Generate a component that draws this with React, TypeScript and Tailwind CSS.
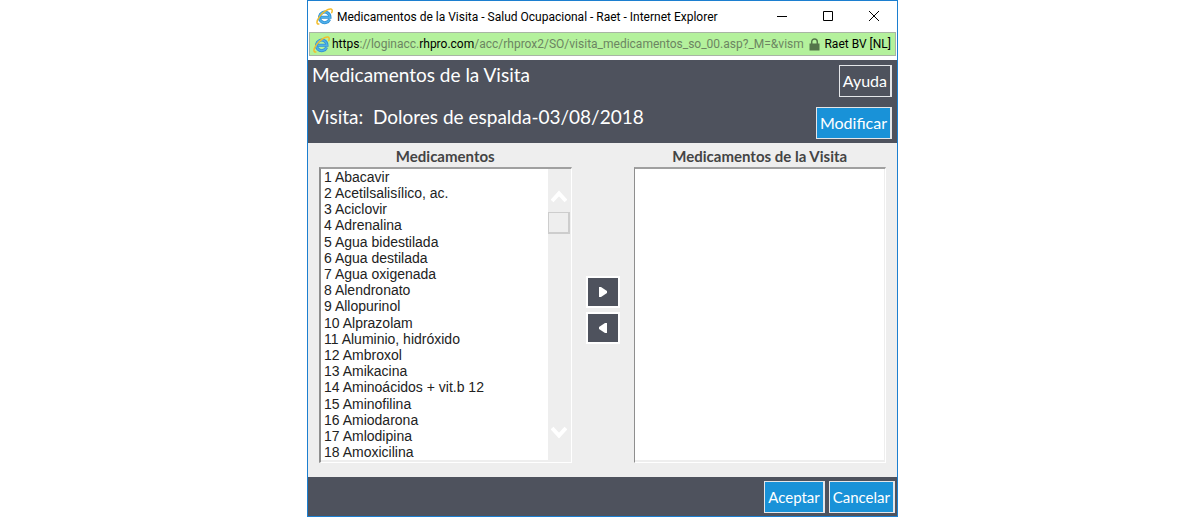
import React from 'react';

const MEDICAMENTOS = [
  'Abacavir',
  'Acetilsalisílico, ac.',
  'Aciclovir',
  'Adrenalina',
  'Agua bidestilada',
  'Agua destilada',
  'Agua oxigenada',
  'Alendronato',
  'Allopurinol',
  'Alprazolam',
  'Aluminio, hidróxido',
  'Ambroxol',
  'Amikacina',
  'Aminoácidos + vit.b 12',
  'Aminofilina',
  'Amiodarona',
  'Amlodipina',
  'Amoxicilina',
];

const ExplorerIcon: React.FC = () => (
  <svg viewBox="0 0 17 17" className="w-[17px] h-[17px] shrink-0" fill="none" aria-hidden="true">
    <path d="M13.6 11.4A5.3 5.3 0 1 1 14 9.2H5" stroke="#2f8fd2" strokeWidth="3" />
    <path d="M13.6 11.4A5.3 5.3 0 1 1 14 9.2H5" stroke="#4fb0ea" strokeWidth="1.6" />
    <path
      d="M2.8 15.9C.2 16.4.4 13 3 9.4 6.2 4.6 12.2.4 15 1c1.5.4 1.4 2 .7 3.6"
      stroke="#f3bd2b"
      strokeWidth="1.5"
      strokeLinecap="round"
    />
  </svg>
);

const TitleBar: React.FC = () => (
  <div className="flex items-center h-[31px] bg-white pl-2 pr-[17px]">
    <ExplorerIcon />
    <span className="ml-1 flex-1 truncate text-[12px] leading-4 text-black">
      Medicamentos de la Visita - Salud Ocupacional - Raet - Internet Explorer
    </span>
    <div className="flex items-center gap-[34px]">
      <button type="button" aria-label="Minimizar">
        <svg viewBox="0 0 12 12" className="w-3 h-3" stroke="#000" fill="none">
          <path d="M1 5.5h10" />
        </svg>
      </button>
      <button type="button" aria-label="Maximizar">
        <svg viewBox="0 0 12 12" className="w-3 h-3" stroke="#000" fill="none">
          <path d="M1.5 .5h9v9h-9z" />
        </svg>
      </button>
      <button type="button" aria-label="Cerrar">
        <svg viewBox="0 0 12 12" className="w-3 h-3" stroke="#000" fill="none">
          <path d="M1 0l10 10M11 0L1 10" />
        </svg>
      </button>
    </div>
  </div>
);

const AddressBar: React.FC = () => (
  <div className="bg-white px-px pb-1">
    <div className="flex items-center h-6 border border-[#a9b5a4] bg-[#b4f19c] pl-[3px] pr-1 text-[12px] leading-4">
      <ExplorerIcon />
      <span className="ml-0.5 flex-1 whitespace-nowrap text-[#6c8562]">
        <span className="text-black">https</span>://loginacc.<span className="text-black">rhpro.com</span>
        /acc/rhprox2/SO/visita_medicamentos_so_00.asp?_M=&amp;vism
      </span>
      <svg viewBox="0 0 11 13" className="ml-1 w-[11px] h-[13px] shrink-0" aria-hidden="true">
        <path d="M2.7 6V3.8a2.8 2.8 0 0 1 5.6 0V6" fill="none" stroke="#54754a" strokeWidth="1.5" />
        <rect x="0.5" y="5.5" width="10" height="7" fill="#54754a" />
      </svg>
      <span className="ml-1 whitespace-nowrap text-black">Raet BV [NL]</span>
    </div>
  </div>
);

interface ActionButtonProps {
  children: React.ReactNode;
  className: string;
}

const ActionButton: React.FC<ActionButtonProps> = ({ children, className }) => (
  <button
    type="button"
    className={`h-8 border border-r-2 border-[#e4e6e9] px-[3px] leading-5 text-white font-[Lato,sans-serif] ${className}`}
  >
    {children}
  </button>
);

interface ListPanelProps {
  id: string;
  label: string;
  items: string[];
  scrollable?: boolean;
}

const ListPanel: React.FC<ListPanelProps> = ({ id, label, items, scrollable }) => (
  <div className="flex-1 min-w-0">
    <label htmlFor={id} className="block h-6 pt-[3px] text-center text-[15px] leading-5 font-bold text-[#444] font-[Lato,sans-serif]">
      {label}
    </label>
    <div
      className={`flex h-[296px] border-t-2 border-r border-b border-t-[#a0a0a0] border-l-[#8e8e8e] border-r-white border-b-white bg-[#eee] pr-px pb-0.5 ${
        scrollable ? 'border-l-2' : 'border-l'
      }`}
    >
      <select
        id={id}
        multiple
        className="appearance-none flex-1 min-w-0 h-full overflow-hidden bg-white outline-none text-[14px] text-[#222] font-['Liberation_Sans',Arial,sans-serif] [&>option:nth-child(5n)]:pt-px"
      >
        {items.map((item, i) => (
          <option key={item} className="block p-0 pl-[3px] min-h-4 leading-4">
            {`${i + 1} ${item}`}
          </option>
        ))}
      </select>
      {scrollable && (
        <div className="flex flex-col items-center w-[22px] pt-5 pb-5 bg-[#eee]">
          <button type="button" aria-label="Subir">
            <svg viewBox="0 0 16 14" className="block w-4 h-3.5" fill="none" stroke="#fff" strokeWidth="4">
              <path d="M1 12L8 4.5L15 12" />
            </svg>
          </button>
          <div className="mt-[9px] mb-auto w-[22px] h-[22px] border border-r-2 border-b-2 border-[#cdcdcd]" />
          <button type="button" aria-label="Bajar">
            <svg viewBox="0 0 16 14" className="block w-4 h-3.5" fill="none" stroke="#fff" strokeWidth="4">
              <path d="M1 2L8 9.5L15 2" />
            </svg>
          </button>
        </div>
      )}
    </div>
  </div>
);

export default function App() {
  return (
    <div className="flex justify-center bg-white pl-1.5 font-[Roboto,sans-serif]">
      <div className="w-full max-w-[591px] border border-[#1c7fd0] bg-white">
        <TitleBar />
        <AddressBar />

        <header className="flex justify-between h-[83px] bg-[#4e525d] pl-1 pr-[5px] pb-1 text-white">
          <div className="flex flex-col gap-[18px] pt-[3px] text-[19px] leading-6 font-[Lato,sans-serif]">
            <h1>Medicamentos de la Visita</h1>
            <p className="whitespace-pre">Visita:  Dolores de espalda-03/08/2018</p>
          </div>
          <div className="flex flex-col items-end justify-between pt-[5px]">
            <ActionButton className="bg-[#4e525d] text-[16px]">Ayuda</ActionButton>
            <ActionButton className="bg-[#1992d8] text-[16px]">Modificar</ActionButton>
          </div>
        </header>

        <main className="flex bg-[#eee] px-[11px] pb-3.5">
          <ListPanel id="medicamentos" label="Medicamentos" items={MEDICAMENTOS} scrollable />
          <div className="flex flex-col justify-center items-center gap-1 w-[62px] pt-3.5">
            <button
              type="button"
              aria-label="Agregar"
              className="flex items-center justify-center w-[34px] h-8 border-2 border-white bg-[#4e525d]"
            >
              <svg viewBox="0 0 8 10" className="w-2 h-2.5" fill="#fff">
                <path d="M0 0h2l6 4v2l-6 4H0z" />
              </svg>
            </button>
            <button
              type="button"
              aria-label="Quitar"
              className="flex items-center justify-center w-[34px] h-8 border-2 border-white bg-[#4e525d]"
            >
              <svg viewBox="0 0 8 10" className="w-2 h-2.5" fill="#fff">
                <path d="M8 0H6L0 4v2l6 4h2z" />
              </svg>
            </button>
          </div>
          <ListPanel id="medicamentos-visita" label="Medicamentos de la Visita" items={[]} />
        </main>

        <footer className="flex items-center justify-end gap-1 h-[39px] bg-[#4e525d] pr-0.5">
          <ActionButton className="bg-[#1992d8] text-[15px]">Aceptar</ActionButton>
          <ActionButton className="bg-[#1992d8] text-[15px]">Cancelar</ActionButton>
        </footer>
      </div>
    </div>
  );
}
